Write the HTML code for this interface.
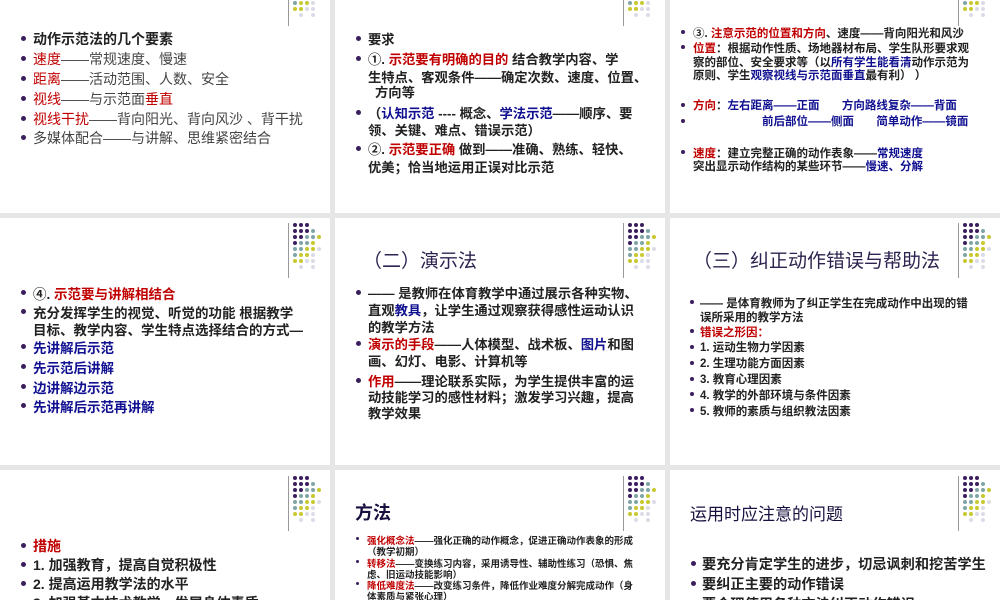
<!DOCTYPE html>
<html><head><meta charset="utf-8"><style>
body{margin:0;width:1000px;height:600px;background:#e6e6e6;overflow:hidden;position:relative;font-family:"Liberation Sans","Noto Sans CJK SC",sans-serif;}
.s{position:absolute;background:#fff;overflow:hidden}
.l{position:absolute;white-space:nowrap;color:#222;}
.b{position:absolute;width:5px;height:5px;border-radius:50%;background:#3b1e5e}
.r{color:#c00000}.u{color:#101090}
.g{position:absolute;left:288px}
.t{position:absolute;white-space:nowrap;color:#2e2350;}
</style></head><body>
<svg width="0" height="0" style="position:absolute"><defs><g id="grid">
<line x1="0.5" y1="0" x2="0.5" y2="55" stroke="#999" stroke-width="1"/>
<g fill="#3b1e5e"><circle cx="7" cy="2" r="2"/><circle cx="13" cy="2" r="2"/><circle cx="19" cy="2" r="2"/>
<circle cx="7" cy="8" r="2"/><circle cx="13" cy="8" r="2"/><circle cx="19" cy="8" r="2"/>
<circle cx="7" cy="14" r="2"/><circle cx="13" cy="14" r="2"/><circle cx="7" cy="20" r="2"/></g>
<g fill="#7fa5a5"><circle cx="25" cy="8" r="2"/><circle cx="19" cy="14" r="2"/><circle cx="25" cy="14" r="2"/>
<circle cx="13" cy="20" r="2"/><circle cx="19" cy="20" r="2"/><circle cx="7" cy="26" r="2"/><circle cx="13" cy="26" r="2"/><circle cx="7" cy="32" r="2"/></g>
<g fill="#c8c830"><circle cx="31" cy="14" r="2"/><circle cx="25" cy="20" r="2"/><circle cx="19" cy="26" r="2"/><circle cx="25" cy="26" r="2"/>
<circle cx="13" cy="32" r="2"/><circle cx="19" cy="32" r="2"/><circle cx="7" cy="38" r="2"/><circle cx="13" cy="38" r="2"/></g>
<g fill="#dcdce8"><circle cx="31" cy="26" r="2"/><circle cx="25" cy="32" r="2"/><circle cx="19" cy="38" r="2"/><circle cx="25" cy="38" r="2"/>
<circle cx="13" cy="44" r="2"/><circle cx="25" cy="44" r="2"/></g>
</g></defs></svg>

<div class="s" style="left:0;top:0;width:330px;height:213px;font-size:14px">
<svg class="g" style="top:-29px" width="40" height="56"><use href="#grid"/></svg>
<div class="b" style="left:21px;top:36px"></div><div class="l" style="left:33px;top:29px;font-weight:bold">动作示范法的几个要素</div>
<div class="b" style="left:21px;top:56px"></div><div class="l" style="left:33px;top:49px;color:#444"><span class="r">速度</span>——常规速度、慢速</div>
<div class="b" style="left:21px;top:76px"></div><div class="l" style="left:33px;top:69px;color:#444"><span class="r">距离</span>——活动范围、人数、安全</div>
<div class="b" style="left:21px;top:96px"></div><div class="l" style="left:33px;top:89px;color:#444"><span class="r">视线</span>——与示范面<span class="r">垂直</span></div>
<div class="b" style="left:21px;top:116px"></div><div class="l" style="left:33px;top:109px;color:#444"><span class="r">视线干扰</span>——背向阳光、背向风沙 、背干扰</div>
<div class="b" style="left:21px;top:135px"></div><div class="l" style="left:33px;top:128px;color:#444">多媒体配合——与讲解、思维紧密结合</div>
</div>

<div class="s" style="left:335px;top:0;width:330px;height:213px;font-size:13.3px;font-weight:bold">
<svg class="g" style="top:-29px" width="40" height="56"><use href="#grid"/></svg>
<div class="b" style="left:21px;top:36px"></div><div class="l" style="left:33px;top:29px">要求</div>
<div class="b" style="left:21px;top:56px"></div><div class="l" style="left:33px;top:49px"> ①. <span class="r">示范要有明确的目的</span> 结合教学内容、学</div>
<div class="l" style="left:33px;top:67px">生特点、客观条件——确定次数、速度、位置、</div>
<div class="l" style="left:40px;top:82px">方向等</div>
<div class="b" style="left:21px;top:110px"></div><div class="l" style="left:33px;top:103px">（<span class="u">认知示范</span> ---- 概念、<span class="u">学法示范</span>——顺序、要</div>
<div class="l" style="left:33px;top:120px">领、关键、难点、错误示范）</div>
<div class="b" style="left:21px;top:146px"></div><div class="l" style="left:33px;top:139px">②. <span class="r">示范要正确</span> 做到——准确、熟练、轻快、</div>
<div class="l" style="left:33px;top:157px">优美；恰当地运用正误对比示范</div>
</div>

<div class="s" style="left:670px;top:0;width:330px;height:213px;font-size:11.5px;font-weight:bold">
<svg class="g" style="top:-29px" width="40" height="56"><use href="#grid"/></svg>
<div class="b" style="left:11px;top:30px;width:4px;height:4px"></div><div class="l" style="left:23px;top:25px">③. <span class="r">注意示范的位置和方向</span>、速度——背向阳光和风沙</div>
<div class="b" style="left:11px;top:45px;width:4px;height:4px"></div><div class="l" style="left:23px;top:40px"><span class="r">位置</span>：根据动作性质、场地器材布局、学生队形要求观</div>
<div class="l" style="left:23px;top:54px">察的部位、安全要求等（以<span class="u">所有学生能看清</span>动作示范为</div>
<div class="l" style="left:23px;top:67px">原则、学生<span class="u">观察视线与示范面垂直</span>最有利） ）</div>
<div class="b" style="left:11px;top:103px;width:4px;height:4px"></div><div class="l" style="left:23px;top:97px"><span class="r">方向</span>：<span class="u">左右距离——正面 &nbsp; &nbsp; &nbsp; 方向路线复杂——背面</span></div>
<div class="b" style="left:11px;top:119px;width:4px;height:4px"></div><div class="l u" style="left:92px;top:113px">前后部位——侧面 &nbsp; &nbsp; &nbsp; 简单动作——镜面</div>
<div class="b" style="left:11px;top:150px;width:4px;height:4px"></div><div class="l" style="left:23px;top:145px"><span class="r">速度</span>：建立完整正确的动作表象——<span class="u">常规速度</span></div>
<div class="l" style="left:23px;top:158px">突出显示动作结构的某些环节——<span class="u">慢速、分解</span></div>
</div>

<div class="s" style="left:0;top:218px;width:330px;height:247px;font-size:13.5px;font-weight:bold">
<svg class="g" style="top:5px" width="40" height="56"><use href="#grid"/></svg>
<div class="b" style="left:21px;top:72px"></div><div class="l" style="left:33px;top:65px">④. <span class="r">示范要与讲解相结合</span></div>
<div class="b" style="left:21px;top:91px"></div><div class="l" style="left:33px;top:84px">充分发挥学生的视觉、听觉的功能 根据教学</div>
<div class="l" style="left:33px;top:101px">目标、教学内容、学生特点选择结合的方式—</div>
<div class="b" style="left:21px;top:126px"></div><div class="l u" style="left:33px;top:119px">先讲解后示范</div>
<div class="b" style="left:21px;top:146px"></div><div class="l u" style="left:33px;top:139px">先示范后讲解</div>
<div class="b" style="left:21px;top:166px"></div><div class="l u" style="left:33px;top:159px">边讲解边示范</div>
<div class="b" style="left:21px;top:185px"></div><div class="l u" style="left:33px;top:178px">先讲解后示范再讲解</div>
</div>

<div class="s" style="left:335px;top:218px;width:330px;height:247px;font-size:13.3px;font-weight:bold">
<svg class="g" style="top:5px" width="40" height="56"><use href="#grid"/></svg>
<div class="t" style="left:28px;top:28px;font-size:19px;font-weight:normal">（二）演示法</div>
<div class="b" style="left:21px;top:72px"></div><div class="l" style="left:33px;top:65px">—— 是教师在体育教学中通过展示各种实物、</div>
<div class="l" style="left:33px;top:82px">直观<span class="u">教具</span>，让学生通过观察获得感性运动认识</div>
<div class="l" style="left:33px;top:99px">的教学方法</div>
<div class="b" style="left:21px;top:123px"></div><div class="l" style="left:33px;top:116px"><span class="r">演示的手段</span>——人体模型、战术板、<span class="u">图片</span>和图</div>
<div class="l" style="left:33px;top:133px">画、幻灯、电影、计算机等</div>
<div class="b" style="left:21px;top:160px"></div><div class="l" style="left:33px;top:153px"><span class="r">作用</span>——理论联系实际，为学生提供丰富的运</div>
<div class="l" style="left:33px;top:169px">动技能学习的感性材料；激发学习兴趣，提高</div>
<div class="l" style="left:33px;top:185px">教学效果</div>
</div>

<div class="s" style="left:670px;top:218px;width:330px;height:247px;font-size:11.5px;font-weight:bold">
<svg class="g" style="top:5px" width="40" height="56"><use href="#grid"/></svg>
<div class="t" style="left:23px;top:28px;font-size:19px;font-weight:normal">（三）纠正动作错误与帮助法</div>
<div class="b" style="left:20px;top:82px;width:4px;height:4px"></div><div class="l" style="left:30px;top:77px">—— 是体育教师为了纠正学生在完成动作中出现的错</div>
<div class="l" style="left:30px;top:91px">误所采用的教学方法</div>
<div class="b" style="left:20px;top:111px;width:4px;height:4px"></div><div class="l r" style="left:30px;top:106px">错误之形因：</div>
<div class="b" style="left:20px;top:127px;width:4px;height:4px"></div><div class="l" style="left:30px;top:121px">1. 运动生物力学因素</div>
<div class="b" style="left:20px;top:143px;width:4px;height:4px"></div><div class="l" style="left:30px;top:137px">2. 生理功能方面因素</div>
<div class="b" style="left:20px;top:159px;width:4px;height:4px"></div><div class="l" style="left:30px;top:153px">3. 教育心理因素</div>
<div class="b" style="left:20px;top:174px;width:4px;height:4px"></div><div class="l" style="left:30px;top:169px">4. 教学的外部环境与条件因素</div>
<div class="b" style="left:20px;top:190px;width:4px;height:4px"></div><div class="l" style="left:30px;top:185px">5. 教师的素质与组织教法因素</div>
</div>

<div class="s" style="left:0;top:470px;width:330px;height:130px;font-size:14px;font-weight:bold">
<svg class="g" style="top:6px" width="40" height="56"><use href="#grid"/></svg>
<div class="b" style="left:21px;top:73px"></div><div class="l r" style="left:33px;top:66px">措施</div>
<div class="b" style="left:21px;top:92px"></div><div class="l" style="left:33px;top:85px">1. 加强教育，提高自觉积极性</div>
<div class="b" style="left:21px;top:111px"></div><div class="l" style="left:33px;top:104px"> 2. 提高运用教学法的水平</div>
<div class="b" style="left:21px;top:130px"></div><div class="l" style="left:33px;top:123px">3. 加强基本技术教学，发展身体素质</div>
</div>

<div class="s" style="left:335px;top:470px;width:330px;height:130px;font-size:9.5px;font-weight:bold">
<svg class="g" style="top:6px" width="40" height="56"><use href="#grid"/></svg>
<div class="t" style="left:20px;top:29px;font-size:18px;font-weight:bold;color:#1a1040">方法</div>
<div class="b" style="left:21px;top:67px;width:3px;height:3px"></div><div class="l" style="left:32px;top:63px"><span class="r">强化概念法</span>——强化正确的动作概念，促进正确动作表象的形成</div>
<div class="l" style="left:32px;top:74px">（教学初期）</div>
<div class="b" style="left:21px;top:90px;width:3px;height:3px"></div><div class="l" style="left:32px;top:86px"><span class="r">转移法</span>——变换练习内容，采用诱导性、辅助性练习（恐惧、焦</div>
<div class="l" style="left:32px;top:97px">虑、旧运动技能影响）</div>
<div class="b" style="left:21px;top:112px;width:3px;height:3px"></div><div class="l" style="left:32px;top:108px"><span class="r">降低难度法</span>——改变练习条件，降低作业难度分解完成动作（身</div>
<div class="l" style="left:32px;top:119px">体素质与紧张心理）</div>
</div>

<div class="s" style="left:670px;top:470px;width:330px;height:130px;font-size:14.2px;font-weight:bold">
<svg class="g" style="top:6px" width="40" height="56"><use href="#grid"/></svg>
<div class="t" style="left:20px;top:30px;font-size:17px;font-weight:normal;color:#1a1040">运用时应注意的问题</div>
<div class="b" style="left:21px;top:91px"></div><div class="l" style="left:32px;top:84px">要充分肯定学生的进步，切忌讽刺和挖苦学生</div>
<div class="b" style="left:21px;top:111px"></div><div class="l" style="left:32px;top:104px">要纠正主要的动作错误</div>
<div class="b" style="left:21px;top:131px"></div><div class="l" style="left:32px;top:124px">要合理使用各种方法纠正动作错误</div>
</div>
</body></html>
